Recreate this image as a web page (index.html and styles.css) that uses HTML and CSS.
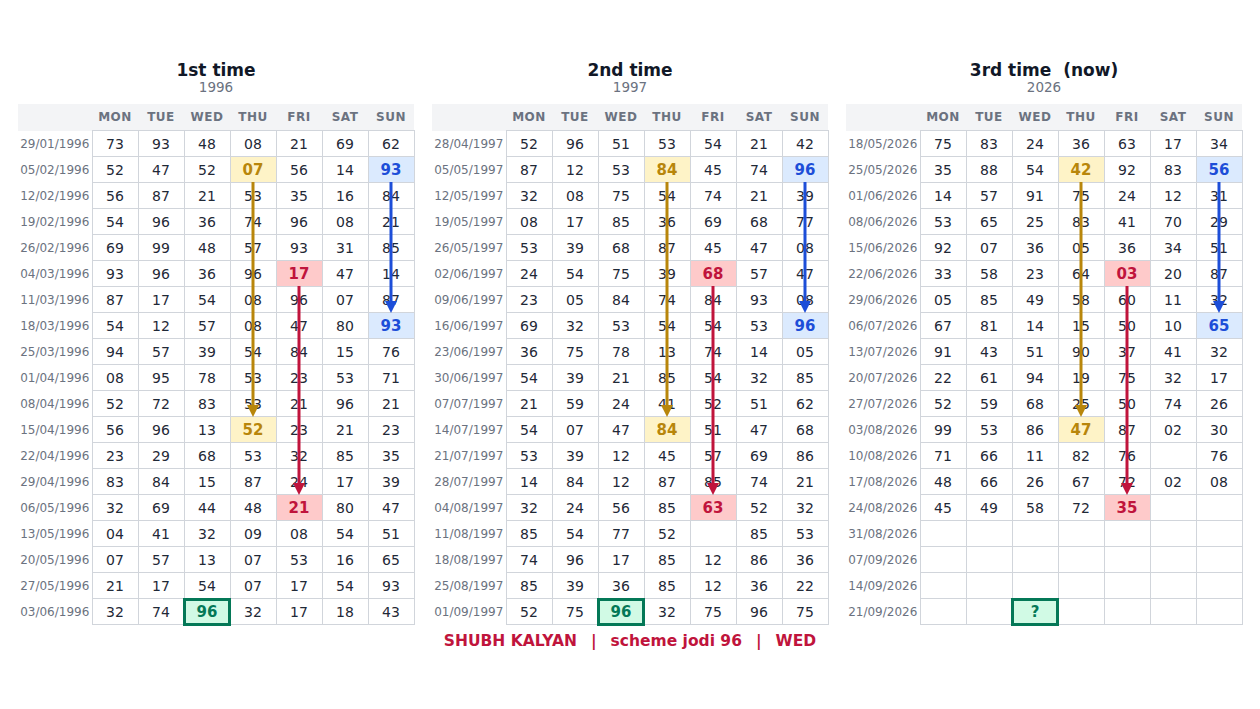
FILE: index.html
```html
<!DOCTYPE html>
<html lang="en">
<head>
<meta charset="utf-8">
<title>Shubh Kalyan scheme jodi 96</title>
<link rel="stylesheet" href="styles.css">
</head>
<body>
<div class="page">
  <div class="panels">
    <section class="panel">
      <div class="title">1st time</div>
      <div class="year">1996</div>
      <div class="grid-wrap">
        <table class="grid">
          <colgroup><col class="c-date"><col><col><col><col><col><col><col></colgroup>
          <thead><tr><th></th><th>MON</th><th>TUE</th><th>WED</th><th>THU</th><th>FRI</th><th>SAT</th><th>SUN</th></tr></thead>
          <tbody>
            <tr><td class="date">29/01/1996</td><td>73</td><td>93</td><td>48</td><td>08</td><td>21</td><td>69</td><td>62</td></tr>
            <tr><td class="date">05/02/1996</td><td>52</td><td>47</td><td>52</td><td class="g">07</td><td>56</td><td>14</td><td class="b">93</td></tr>
            <tr><td class="date">12/02/1996</td><td>56</td><td>87</td><td>21</td><td>53</td><td>35</td><td>16</td><td>84</td></tr>
            <tr><td class="date">19/02/1996</td><td>54</td><td>96</td><td>36</td><td>74</td><td>96</td><td>08</td><td>21</td></tr>
            <tr><td class="date">26/02/1996</td><td>69</td><td>99</td><td>48</td><td>57</td><td>93</td><td>31</td><td>85</td></tr>
            <tr><td class="date">04/03/1996</td><td>93</td><td>96</td><td>36</td><td>96</td><td class="r">17</td><td>47</td><td>14</td></tr>
            <tr><td class="date">11/03/1996</td><td>87</td><td>17</td><td>54</td><td>08</td><td>96</td><td>07</td><td>87</td></tr>
            <tr><td class="date">18/03/1996</td><td>54</td><td>12</td><td>57</td><td>08</td><td>47</td><td>80</td><td class="b">93</td></tr>
            <tr><td class="date">25/03/1996</td><td>94</td><td>57</td><td>39</td><td>54</td><td>84</td><td>15</td><td>76</td></tr>
            <tr><td class="date">01/04/1996</td><td>08</td><td>95</td><td>78</td><td>53</td><td>23</td><td>53</td><td>71</td></tr>
            <tr><td class="date">08/04/1996</td><td>52</td><td>72</td><td>83</td><td>53</td><td>21</td><td>96</td><td>21</td></tr>
            <tr><td class="date">15/04/1996</td><td>56</td><td>96</td><td>13</td><td class="g">52</td><td>23</td><td>21</td><td>23</td></tr>
            <tr><td class="date">22/04/1996</td><td>23</td><td>29</td><td>68</td><td>53</td><td>32</td><td>85</td><td>35</td></tr>
            <tr><td class="date">29/04/1996</td><td>83</td><td>84</td><td>15</td><td>87</td><td>24</td><td>17</td><td>39</td></tr>
            <tr><td class="date">06/05/1996</td><td>32</td><td>69</td><td>44</td><td>48</td><td class="r">21</td><td>80</td><td>47</td></tr>
            <tr><td class="date">13/05/1996</td><td>04</td><td>41</td><td>32</td><td>09</td><td>08</td><td>54</td><td>51</td></tr>
            <tr><td class="date">20/05/1996</td><td>07</td><td>57</td><td>13</td><td>07</td><td>53</td><td>16</td><td>65</td></tr>
            <tr><td class="date">27/05/1996</td><td>21</td><td>17</td><td>54</td><td>07</td><td>17</td><td>54</td><td>93</td></tr>
            <tr><td class="date">03/06/1996</td><td>32</td><td>74</td><td class="k">96</td><td>32</td><td>17</td><td>18</td><td>43</td></tr>
          </tbody>
        </table>
        <svg class="arrows" width="396" height="520" viewBox="0 0 396 520" aria-hidden="true">
          <line x1="235" y1="78" x2="235" y2="303" stroke="#b8860b" stroke-width="3"/>
          <polygon points="229,301 241,301 235,313" fill="#b8860b"/>
          <line x1="281" y1="182" x2="281" y2="381" stroke="#c0143c" stroke-width="3"/>
          <polygon points="275,379 287,379 281,391" fill="#c0143c"/>
          <line x1="373" y1="78" x2="373" y2="199" stroke="#1d4ed8" stroke-width="3"/>
          <polygon points="367,197 379,197 373,209" fill="#1d4ed8"/>
        </svg>
      </div>
    </section>

    <section class="panel">
      <div class="title">2nd time</div>
      <div class="year">1997</div>
      <div class="grid-wrap">
        <table class="grid">
          <colgroup><col class="c-date"><col><col><col><col><col><col><col></colgroup>
          <thead><tr><th></th><th>MON</th><th>TUE</th><th>WED</th><th>THU</th><th>FRI</th><th>SAT</th><th>SUN</th></tr></thead>
          <tbody>
            <tr><td class="date">28/04/1997</td><td>52</td><td>96</td><td>51</td><td>53</td><td>54</td><td>21</td><td>42</td></tr>
            <tr><td class="date">05/05/1997</td><td>87</td><td>12</td><td>53</td><td class="g">84</td><td>45</td><td>74</td><td class="b">96</td></tr>
            <tr><td class="date">12/05/1997</td><td>32</td><td>08</td><td>75</td><td>54</td><td>74</td><td>21</td><td>39</td></tr>
            <tr><td class="date">19/05/1997</td><td>08</td><td>17</td><td>85</td><td>36</td><td>69</td><td>68</td><td>77</td></tr>
            <tr><td class="date">26/05/1997</td><td>53</td><td>39</td><td>68</td><td>87</td><td>45</td><td>47</td><td>08</td></tr>
            <tr><td class="date">02/06/1997</td><td>24</td><td>54</td><td>75</td><td>39</td><td class="r">68</td><td>57</td><td>47</td></tr>
            <tr><td class="date">09/06/1997</td><td>23</td><td>05</td><td>84</td><td>74</td><td>84</td><td>93</td><td>08</td></tr>
            <tr><td class="date">16/06/1997</td><td>69</td><td>32</td><td>53</td><td>54</td><td>54</td><td>53</td><td class="b">96</td></tr>
            <tr><td class="date">23/06/1997</td><td>36</td><td>75</td><td>78</td><td>13</td><td>74</td><td>14</td><td>05</td></tr>
            <tr><td class="date">30/06/1997</td><td>54</td><td>39</td><td>21</td><td>85</td><td>54</td><td>32</td><td>85</td></tr>
            <tr><td class="date">07/07/1997</td><td>21</td><td>59</td><td>24</td><td>41</td><td>52</td><td>51</td><td>62</td></tr>
            <tr><td class="date">14/07/1997</td><td>54</td><td>07</td><td>47</td><td class="g">84</td><td>51</td><td>47</td><td>68</td></tr>
            <tr><td class="date">21/07/1997</td><td>53</td><td>39</td><td>12</td><td>45</td><td>57</td><td>69</td><td>86</td></tr>
            <tr><td class="date">28/07/1997</td><td>14</td><td>84</td><td>12</td><td>87</td><td>85</td><td>74</td><td>21</td></tr>
            <tr><td class="date">04/08/1997</td><td>32</td><td>24</td><td>56</td><td>85</td><td class="r">63</td><td>52</td><td>32</td></tr>
            <tr><td class="date">11/08/1997</td><td>85</td><td>54</td><td>77</td><td>52</td><td></td><td>85</td><td>53</td></tr>
            <tr><td class="date">18/08/1997</td><td>74</td><td>96</td><td>17</td><td>85</td><td>12</td><td>86</td><td>36</td></tr>
            <tr><td class="date">25/08/1997</td><td>85</td><td>39</td><td>36</td><td>85</td><td>12</td><td>36</td><td>22</td></tr>
            <tr><td class="date">01/09/1997</td><td>52</td><td>75</td><td class="k">96</td><td>32</td><td>75</td><td>96</td><td>75</td></tr>
          </tbody>
        </table>
        <svg class="arrows" width="396" height="520" viewBox="0 0 396 520" aria-hidden="true">
          <line x1="235" y1="78" x2="235" y2="303" stroke="#b8860b" stroke-width="3"/>
          <polygon points="229,301 241,301 235,313" fill="#b8860b"/>
          <line x1="281" y1="182" x2="281" y2="381" stroke="#c0143c" stroke-width="3"/>
          <polygon points="275,379 287,379 281,391" fill="#c0143c"/>
          <line x1="373" y1="78" x2="373" y2="199" stroke="#1d4ed8" stroke-width="3"/>
          <polygon points="367,197 379,197 373,209" fill="#1d4ed8"/>
        </svg>
      </div>
    </section>

    <section class="panel">
      <div class="title">3rd time&nbsp; (now)</div>
      <div class="year">2026</div>
      <div class="grid-wrap">
        <table class="grid">
          <colgroup><col class="c-date"><col><col><col><col><col><col><col></colgroup>
          <thead><tr><th></th><th>MON</th><th>TUE</th><th>WED</th><th>THU</th><th>FRI</th><th>SAT</th><th>SUN</th></tr></thead>
          <tbody>
            <tr><td class="date">18/05/2026</td><td>75</td><td>83</td><td>24</td><td>36</td><td>63</td><td>17</td><td>34</td></tr>
            <tr><td class="date">25/05/2026</td><td>35</td><td>88</td><td>54</td><td class="g">42</td><td>92</td><td>83</td><td class="b">56</td></tr>
            <tr><td class="date">01/06/2026</td><td>14</td><td>57</td><td>91</td><td>75</td><td>24</td><td>12</td><td>31</td></tr>
            <tr><td class="date">08/06/2026</td><td>53</td><td>65</td><td>25</td><td>83</td><td>41</td><td>70</td><td>29</td></tr>
            <tr><td class="date">15/06/2026</td><td>92</td><td>07</td><td>36</td><td>05</td><td>36</td><td>34</td><td>51</td></tr>
            <tr><td class="date">22/06/2026</td><td>33</td><td>58</td><td>23</td><td>64</td><td class="r">03</td><td>20</td><td>87</td></tr>
            <tr><td class="date">29/06/2026</td><td>05</td><td>85</td><td>49</td><td>58</td><td>60</td><td>11</td><td>32</td></tr>
            <tr><td class="date">06/07/2026</td><td>67</td><td>81</td><td>14</td><td>15</td><td>50</td><td>10</td><td class="b">65</td></tr>
            <tr><td class="date">13/07/2026</td><td>91</td><td>43</td><td>51</td><td>90</td><td>37</td><td>41</td><td>32</td></tr>
            <tr><td class="date">20/07/2026</td><td>22</td><td>61</td><td>94</td><td>19</td><td>75</td><td>32</td><td>17</td></tr>
            <tr><td class="date">27/07/2026</td><td>52</td><td>59</td><td>68</td><td>25</td><td>50</td><td>74</td><td>26</td></tr>
            <tr><td class="date">03/08/2026</td><td>99</td><td>53</td><td>86</td><td class="g">47</td><td>87</td><td>02</td><td>30</td></tr>
            <tr><td class="date">10/08/2026</td><td>71</td><td>66</td><td>11</td><td>82</td><td>76</td><td></td><td>76</td></tr>
            <tr><td class="date">17/08/2026</td><td>48</td><td>66</td><td>26</td><td>67</td><td>72</td><td>02</td><td>08</td></tr>
            <tr><td class="date">24/08/2026</td><td>45</td><td>49</td><td>58</td><td>72</td><td class="r">35</td><td></td><td></td></tr>
            <tr><td class="date">31/08/2026</td><td></td><td></td><td></td><td></td><td></td><td></td><td></td></tr>
            <tr><td class="date">07/09/2026</td><td></td><td></td><td></td><td></td><td></td><td></td><td></td></tr>
            <tr><td class="date">14/09/2026</td><td></td><td></td><td></td><td></td><td></td><td></td><td></td></tr>
            <tr><td class="date">21/09/2026</td><td></td><td></td><td class="k">?</td><td></td><td></td><td></td><td></td></tr>
          </tbody>
        </table>
        <svg class="arrows" width="396" height="520" viewBox="0 0 396 520" aria-hidden="true">
          <line x1="235" y1="78" x2="235" y2="303" stroke="#b8860b" stroke-width="3"/>
          <polygon points="229,301 241,301 235,313" fill="#b8860b"/>
          <line x1="281" y1="182" x2="281" y2="381" stroke="#c0143c" stroke-width="3"/>
          <polygon points="275,379 287,379 281,391" fill="#c0143c"/>
          <line x1="373" y1="78" x2="373" y2="199" stroke="#1d4ed8" stroke-width="3"/>
          <polygon points="367,197 379,197 373,209" fill="#1d4ed8"/>
        </svg>
      </div>
    </section>
  </div>
  <div class="caption"><span>SHUBH KALYAN</span><span class="sep">|</span><span>scheme jodi 96</span><span class="sep">|</span><span>WED</span></div>
</div>
</body>
</html>
```

FILE: styles.css
```css
html, body {
  margin: 0;
  padding: 0;
  background: #ffffff;
}

body {
  font-family: "DejaVu Sans", "Liberation Sans", sans-serif;
  color: #1f2937;
}

.page {
  padding: 60px 18px 0;
}

.panels {
  display: flex;
  gap: 18px;
}

.panel {
  width: 396px;
  flex: 0 0 396px;
}

.title {
  font-size: 17px;
  font-weight: bold;
  line-height: 20px;
  text-align: center;
  color: #111827;
}

.year {
  font-size: 13.5px;
  line-height: 15px;
  text-align: center;
  color: #6b7280;
  margin-bottom: 9px;
}

.grid-wrap {
  position: relative;
  width: 396px;
}

.grid {
  border-collapse: collapse;
  table-layout: fixed;
  width: 396px;
}

.grid col {
  width: 46px;
}

.grid col.c-date {
  width: 74px;
}

.grid th {
  background: #f3f4f6;
  height: 26px;
  padding: 0;
  font-size: 12px;
  font-weight: bold;
  letter-spacing: 0.5px;
  color: #6b7280;
  text-align: center;
  border: none;
}

.grid td {
  height: 25px;
  padding: 0;
  border: 1px solid #d1d5db;
  text-align: center;
  font-size: 14px;
  color: #1f2937;
  background: #ffffff;
}

.grid td.date {
  border: none;
  font-size: 12px;
  color: #6b7280;
  background: transparent;
}

.grid td.g {
  background: #fef3c7;
  color: #b8860b;
  font-weight: bold;
  font-size: 15px;
}

.grid td.b {
  background: #dbeafe;
  color: #1d4ed8;
  font-weight: bold;
  font-size: 15px;
}

.grid td.r {
  background: #fecaca;
  color: #c0143c;
  font-weight: bold;
  font-size: 15px;
}

.grid td.k {
  background: #d1fae5;
  color: #047857;
  font-weight: bold;
  font-size: 15px;
  outline: 3px solid #047857;
  outline-offset: -2px;
}

.arrows {
  position: absolute;
  top: 0;
  left: 0;
  pointer-events: none;
}

.caption {
  margin-top: 7px;
  text-align: center;
  font-size: 15.5px;
  line-height: 18px;
  font-weight: bold;
  color: #c0143c;
}

.caption .sep {
  margin: 0 14px;
}
```
